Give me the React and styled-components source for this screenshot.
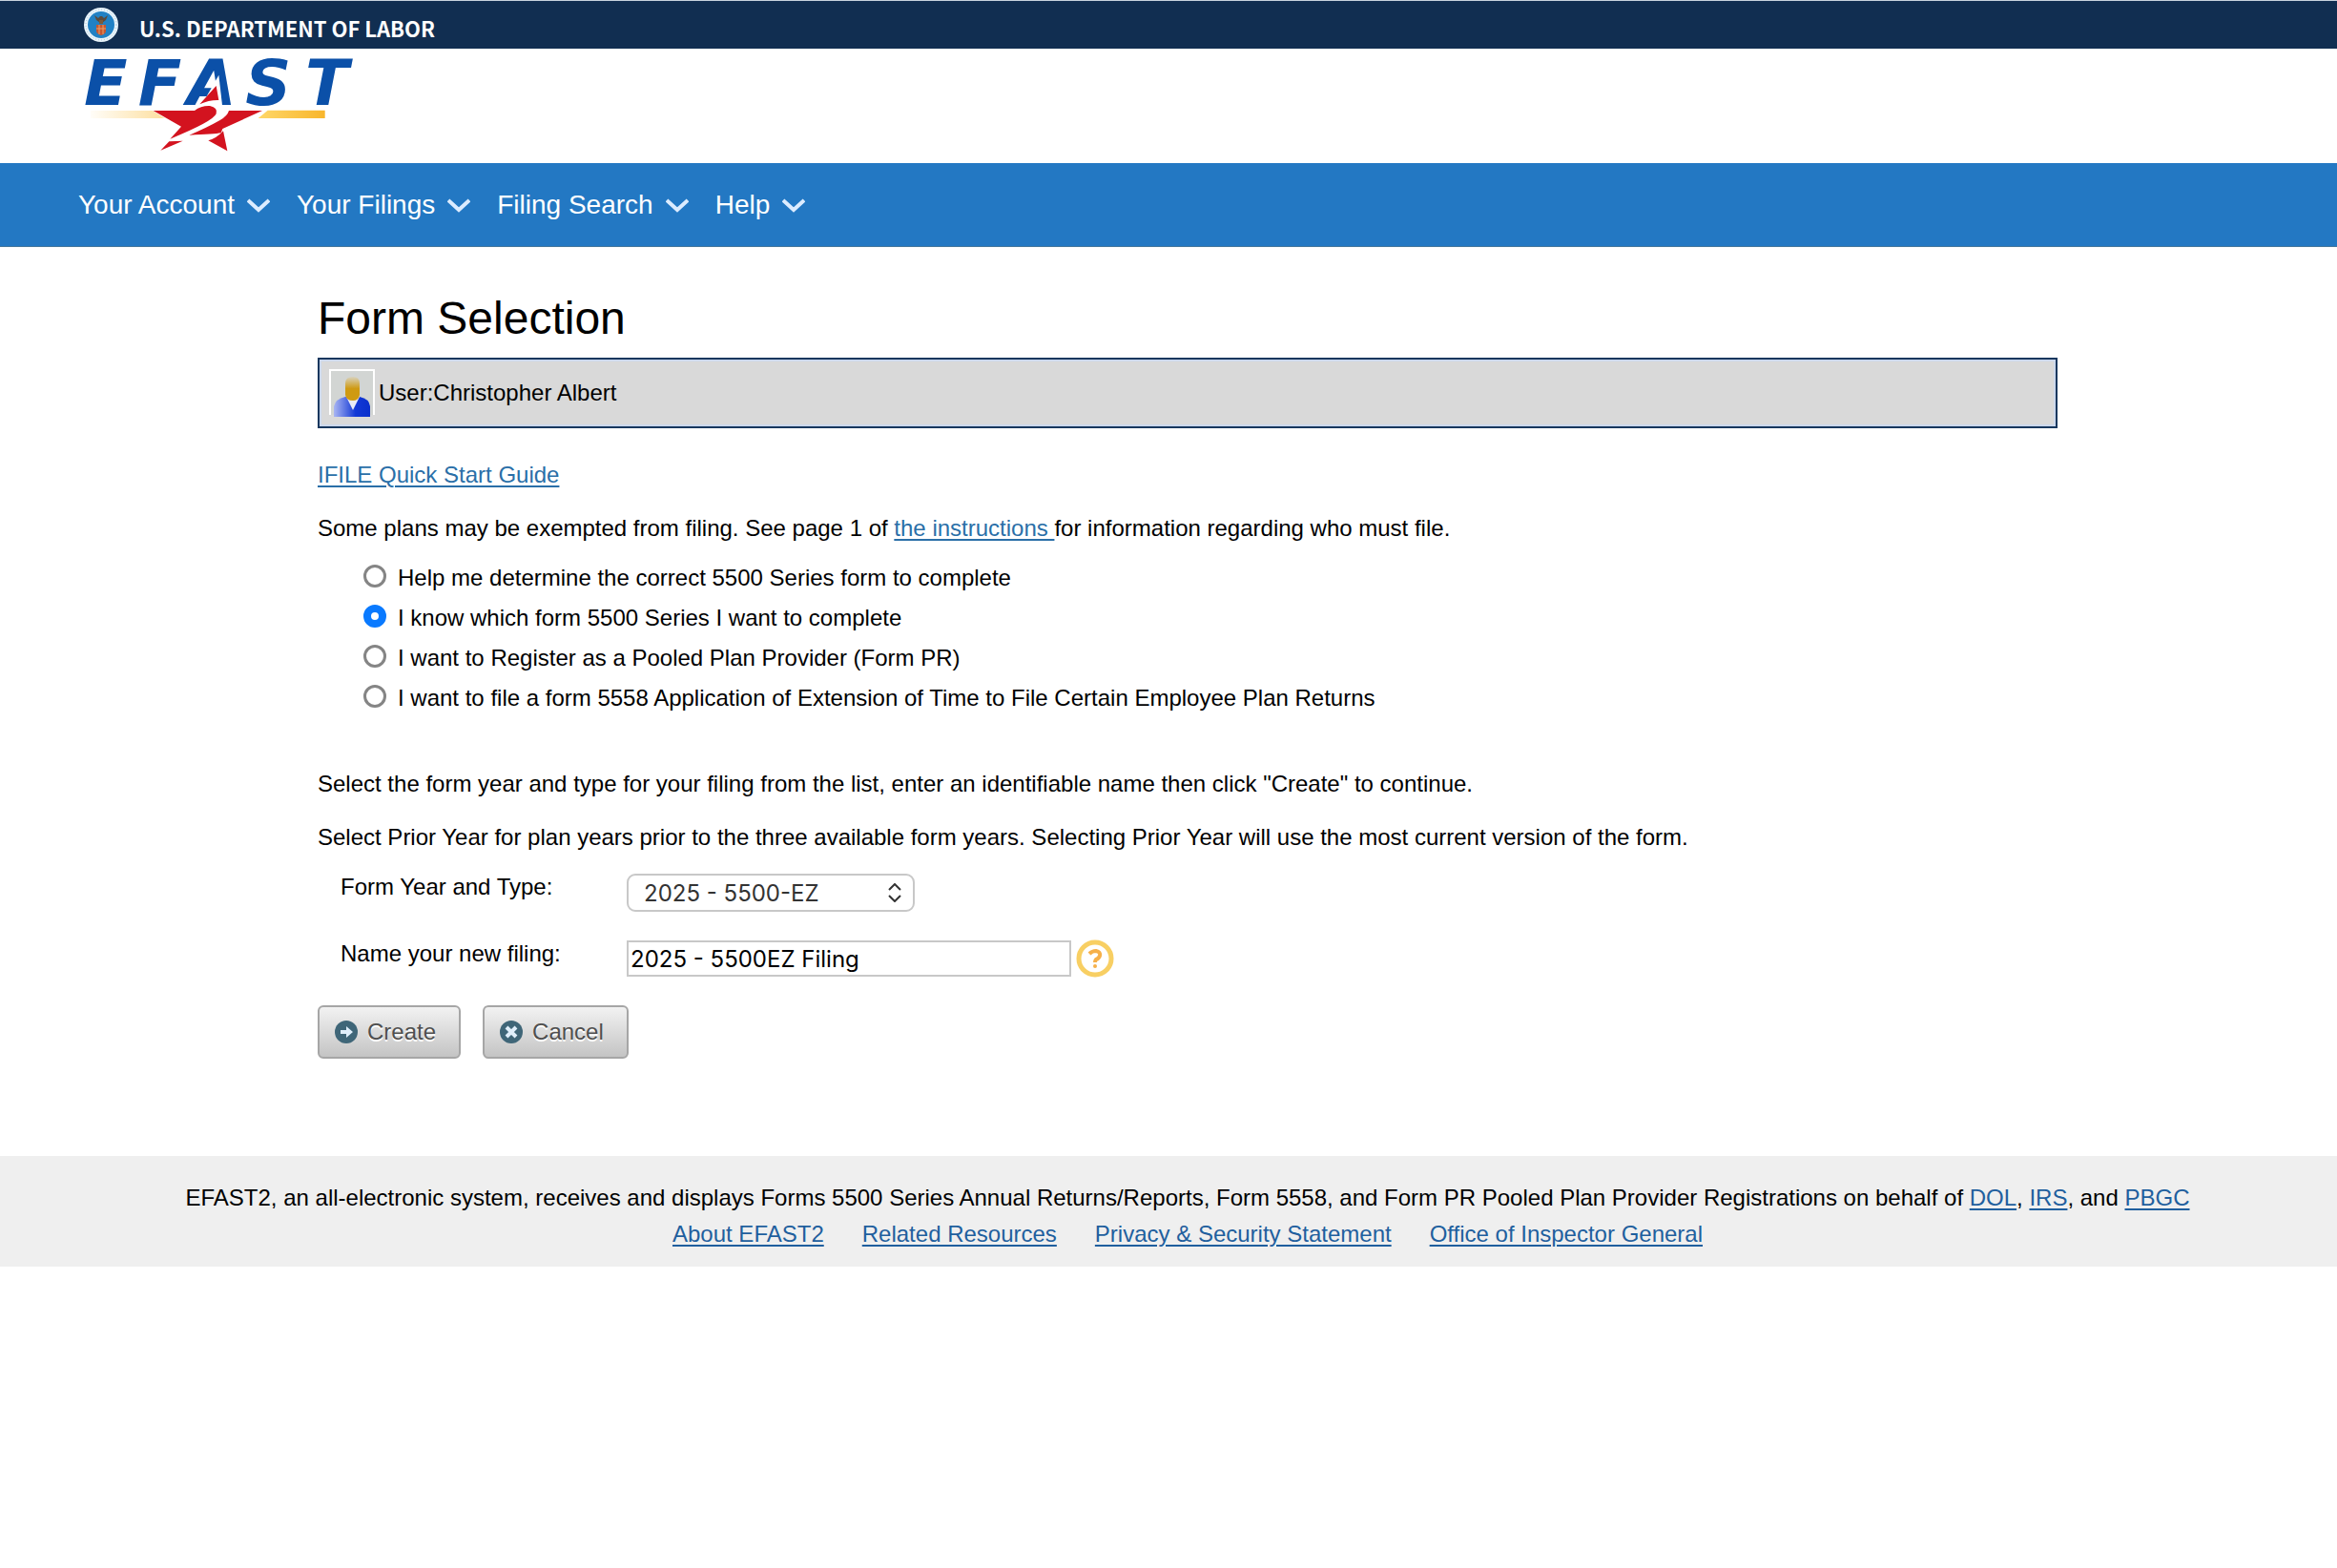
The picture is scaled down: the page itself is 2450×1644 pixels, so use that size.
import React, {useState} from "react";
import styled, {createGlobalStyle} from "styled-components";

const menus = ["Your Account", "Your Filings", "Filing Search", "Help"];

const choices = [
	{id: "determine", text: "Help me determine the correct 5500 Series form to complete"},
	{id: "know", text: "I know which form 5500 Series I want to complete"},
	{id: "register", text: "I want to Register as a Pooled Plan Provider (Form PR)"},
	{id: "extension", text: "I want to file a form 5558 Application of Extension of Time to File Certain Employee Plan Returns"},
];

const footerLinks = ["About EFAST2", "Related Resources", "Privacy & Security Statement", "Office of Inspector General"];

const Seal = () => (
	<svg width="36" height="36" viewBox="0 0 36 36" aria-hidden="true">
		<circle cx="18" cy="18" r="18" fill="#eaf4fa" />
		<circle cx="18" cy="18" r="16" fill="none" stroke="#9cc3dc" strokeWidth="1" strokeDasharray="1 2" />
		<circle cx="18" cy="18" r="14" fill="#2181c4" />
		<path d="M11 8l4 3 2-2h2l2 2 4-3-2 5-4 3h-2l-4-3z" fill="#5b4a3c" />
		<path d="M16 13h4v4h-4z" fill="#7a5a3a" />
		<path d="M13 18h10v7q-1 3-5 4-4-1-5-4z" fill="#c7562f" />
		<path d="M13 22h10M16 18v10M20 18v10" stroke="#e9a069" strokeWidth="1" />
	</svg>
);

const Logo = () => (
	<LogoSvg width="296" height="100" viewBox="75 180 888 300" role="img" aria-label="EFAST2">
		<defs>
			<linearGradient id="fadeIn" x1="0" x2="1">
				<stop offset="0" stopColor="#fffdf8" />
				<stop offset="1" stopColor="#fddf9f" />
			</linearGradient>
			<linearGradient id="gold" x1="0" x2="1">
				<stop offset="0" stopColor="#ffd768" />
				<stop offset="1" stopColor="#f8b62c" />
			</linearGradient>
		</defs>
		<path d="M105 348H300L338 372H105z" fill="url(#fadeIn)" />
		<path d="M662 347H842V372H632z" fill="url(#gold)" />
		<LogoText x="84 254 408 592 780" y="329">EFAST</LogoText>
		<path d="M508 236L454 331H519z" fill="#fff" />
		<g fill="#d3131f">
			<path d="M500 270L508 315Q478 314 448 328z" />
			<path d="M302 348H432Q452 332 480 333Q506 338 500 358Q490 382 355 437L390 398z" />
			<path d="M540 348H645L520 405L515 418Q495 422 415 425Q470 402 512 378Q535 365 540 348z" />
			<path d="M325 473L352 445L395 443z" />
			<path d="M475 442Q500 436 522 412L535 475z" />
		</g>
	</LogoSvg>
);

const Chevron = () => (
	<svg width="24" height="16" viewBox="0 0 24 16" fill="none" aria-hidden="true">
		<path d="M1 3l11 10L23 3" stroke="#dcecff" strokeWidth="4" />
	</svg>
);

const Avatar = () => (
	<svg width="48" height="50" viewBox="0 0 48 50" aria-hidden="true">
		<defs>
			<linearGradient id="coat" x1="0" x2="1">
				<stop offset="0" stopColor="#a9b5f2" />
				<stop offset="0.6" stopColor="#1238d6" />
				<stop offset="1" stopColor="#0a30cc" />
			</linearGradient>
			<linearGradient id="face" x1="0" x2="0" y1="0" y2="1">
				<stop offset="0" stopColor="#d8d2bd" />
				<stop offset="0.5" stopColor="#cf9a12" />
			</linearGradient>
		</defs>
		<path d="M1 48V1H47V48" fill="#d2d5d3" stroke="#fff" strokeWidth="2" />
		<path d="M5 50V39Q7 31 17 29H32Q42 31 43 39V50z" fill="url(#coat)" />
		<path d="M18 29H32L25 43z" fill="#e9ecf7" />
		<path d="M17 15Q17 8 25 8Q32 8 32 15V27Q31 33 25 33Q18 33 17 27z" fill="url(#face)" />
	</svg>
);

const HelpIcon = () => (
	<svg width="40" height="40" viewBox="0 0 40 40" fill="none" aria-hidden="true">
		<circle cx="20" cy="20" r="17" stroke="#f8cf63" strokeWidth="5" />
		<path d="M14 15q3-3 7-3 5 1 4 5-1 3-4 4-1 1-1 3" stroke="#f6b04a" strokeWidth="4" />
		<circle cx="20" cy="28" r="2" fill="#f6b04a" />
	</svg>
);

const ArrowIcon = () => (
	<svg width="24" height="24" viewBox="0 0 24 24" aria-hidden="true">
		<circle cx="12" cy="12" r="12" fill="#3f6678" />
		<path d="M6 10h6V6l7 6-7 6v-4H6z" fill="#dfeefa" />
	</svg>
);

const CrossIcon = () => (
	<svg width="24" height="24" viewBox="0 0 24 24" aria-hidden="true">
		<circle cx="12" cy="12" r="12" fill="#3f6678" />
		<path d="M7 7l10 10M17 7L7 17" stroke="#dfeefa" strokeWidth="4" />
	</svg>
);

const App = () => {
	const [choice, setChoice] = useState("know");
	const [open, setOpen] = useState(null);
	const [name, setName] = useState("2025 - 5500EZ Filing");

	return (
		<>
			<GlobalStyle />
			<TopBar>
				<Seal />
				<Department>U.S. DEPARTMENT OF LABOR</Department>
			</TopBar>
			<LogoBar>
				<Logo />
			</LogoBar>
			<Nav>
				{menus.map((menu) => (
					<NavButton
						key={menu}
						type="button"
						aria-expanded={open === menu}
						onClick={() => setOpen(open === menu ? null : menu)}
					>
						{menu}
						<Chevron />
					</NavButton>
				))}
			</Nav>
			<Main>
				<Content>
					<Title>Form Selection</Title>
					<UserBox>
						<Avatar />
						<span>User:Christopher Albert</span>
					</UserBox>
					<Paragraph><Link href="#guide">IFILE Quick Start Guide</Link></Paragraph>
					<Paragraph>
						Some plans may be exempted from filing. See page 1 of <Link href="#instructions">the instructions </Link>for
						information regarding who must file.
					</Paragraph>
					<Choices>
						{choices.map((item) => (
							<Choice key={item.id}>
								<Radio
									type="radio"
									name="choice"
									checked={choice === item.id}
									onChange={() => setChoice(item.id)}
								/>
								{item.text}
							</Choice>
						))}
					</Choices>
					<Paragraph>
						Select the form year and type for your filing from the list, enter an identifiable name then click "Create" to
						continue.
					</Paragraph>
					<Paragraph>
						Select Prior Year for plan years prior to the three available form years. Selecting Prior Year will use the most
						current version of the form.
					</Paragraph>
					<Fields>
						<label htmlFor="formType">Form Year and Type:</label>
						<SelectWrap>
							<Select id="formType" defaultValue="2025 - 5500-EZ">
								<option>2025 - 5500-EZ</option>
							</Select>
							<Arrows width="14" height="20" viewBox="0 0 14 20" fill="none" aria-hidden="true">
								<path d="M1 7l6-6 6 6M1 13l6 6 6-6" stroke="#333" strokeWidth="2" />
							</Arrows>
						</SelectWrap>
						<label htmlFor="filingName">Name your new filing:</label>
						<NameRow>
							<TextInput id="filingName" value={name} onChange={(e) => setName(e.target.value)} />
							<HelpButton type="button" aria-label="Help with filing name"><HelpIcon /></HelpButton>
						</NameRow>
					</Fields>
					<Actions>
						<ActionButton type="button"><ArrowIcon />Create</ActionButton>
						<ActionButton type="button"><CrossIcon />Cancel</ActionButton>
					</Actions>
				</Content>
			</Main>
			<Footer>
				<div>
					EFAST2, an all-electronic system, receives and displays Forms 5500 Series Annual Returns/Reports, Form 5558, and
					Form PR Pooled Plan Provider Registrations on behalf of <FooterLink href="#dol">DOL</FooterLink>,{" "}
					<FooterLink href="#irs">IRS</FooterLink>, and <FooterLink href="#pbgc">PBGC</FooterLink>
				</div>
				<FooterNav>
					{footerLinks.map((text) => <FooterLink key={text} href="#footer">{text}</FooterLink>)}
				</FooterNav>
			</Footer>
		</>
	);
};

const GlobalStyle = createGlobalStyle`
	* {
		box-sizing: border-box;
	}
	body {
		margin: 0;
		background: #fff;
		color: #000;
		font-family: "Liberation Sans", Arial, sans-serif;
		font-size: 24px;
		line-height: 28px;
	}
	svg {
		display: block;
		flex-shrink: 0;
	}
`;
const TopBar = styled.div`
	display: flex;
	align-items: center;
	gap: 22px;
	height: 51px;
	padding-left: 88px;
	background: #112e51;
	border-top: 1px solid #c9d3de;
`;
const Department = styled.span`
	padding-top: 6px;
	color: #fff;
	font-family: "Noto Sans CJK SC", "Open Sans", sans-serif;
	font-size: 22px;
	font-weight: bold;
`;
const LogoBar = styled.header`
	height: 120px;
	padding: 9px 85px;
`;
const LogoSvg = styled.svg`
	overflow: visible;
`;
const LogoText = styled.text`
	fill: #0b50a8;
	font-family: "DejaVu Sans", sans-serif;
	font-size: 200px;
	font-style: italic;
	font-weight: bold;
`;
const Nav = styled.nav`
	display: flex;
	align-items: center;
	gap: 28px;
	height: 88px;
	padding-left: 82px;
	background: #2378c3;
	border-bottom: 1px solid #45779c;
`;
const NavButton = styled.button`
	display: flex;
	align-items: center;
	gap: 13px;
	padding: 0;
	border: 0;
	background: none;
	color: #fff;
	font-family: inherit;
	font-size: 28px;
	line-height: 32px;
	cursor: pointer;
`;
const Main = styled.main`
	padding: 47px 40px 102px 80px;
`;
const Content = styled.div`
	max-width: 1824px;
	margin: 0 auto;
`;
const Title = styled.h1`
	margin: 0 0 13px;
	font-size: 48px;
	font-weight: normal;
	line-height: 56px;
`;
const UserBox = styled.div`
	display: flex;
	align-items: center;
	gap: 4px;
	height: 74px;
	margin-bottom: 35px;
	padding-left: 10px;
	background: #d9d9d9;
	border: 2px solid #17375e;
	box-shadow: inset 0 0 0 2px #ccd8ec;
`;
const Paragraph = styled.p`
	margin: 0 0 28px;
`;
const Link = styled.a`
	color: #2a6fa8;
	text-decoration-thickness: 2px;
	text-underline-offset: 3px;
`;
const Choices = styled.div`
	margin: -11px 0 55px 48px;
`;
const Choice = styled.label`
	display: flex;
	align-items: center;
	gap: 12px;
	min-height: 42px;
`;
const Radio = styled.input`
	appearance: none;
	width: 24px;
	height: 24px;
	margin: 0 0 4px;
	background: #fff;
	border: ${props => props.checked ? "8px solid #0a7aff" : "3px solid #858585"};
	border-radius: 50%;
`;
const Fields = styled.div`
	display: grid;
	grid-template-columns: 300px 1fr;
	row-gap: 30px;
	margin: -4px 0 30px;
	padding-left: 24px;
`;
const SelectWrap = styled.div`
	position: relative;
	width: 302px;
`;
const Select = styled.select`
	appearance: none;
	display: block;
	width: 100%;
	height: 40px;
	padding: 0 16px;
	background: #fff;
	border: 2px solid #c8c8c8;
	border-radius: 9px;
	color: #333;
	font-family: Inter, sans-serif;
	font-size: 24px;
`;
const Arrows = styled.svg`
	position: absolute;
	top: 10px;
	right: 14px;
	pointer-events: none;
`;
const NameRow = styled.div`
	display: flex;
	align-items: center;
	gap: 5px;
	height: 38px;
`;
const TextInput = styled.input`
	width: 466px;
	height: 38px;
	padding: 0 2px;
	background: #fff;
	border: 2px solid #c8c8c8;
	color: #000;
	font-family: Inter, sans-serif;
	font-size: 24px;
`;
const HelpButton = styled.button`
	padding: 0;
	border: 0;
	background: none;
	cursor: pointer;
`;
const Actions = styled.div`
	display: flex;
	gap: 23px;
`;
const ActionButton = styled.button`
	display: flex;
	align-items: center;
	gap: 10px;
	height: 56px;
	padding: 0 24px 0 16px;
	background: linear-gradient(#f2f2f2, #c4c4c4);
	border: 2px solid #a6a6a6;
	border-radius: 6px;
	color: #4f4f4f;
	font-family: inherit;
	font-size: 24px;
	text-shadow: 0 2px 0 #fff;
	cursor: pointer;
`;
const Footer = styled.footer`
	padding: 25px 0 15px 40px;
	background: #efefef;
	line-height: 38px;
	text-align: center;
`;
const FooterNav = styled.div`
	display: flex;
	justify-content: center;
	gap: 40px;
`;
const FooterLink = styled(Link)`
	color: #1f5f9e;
`;

export default App;
